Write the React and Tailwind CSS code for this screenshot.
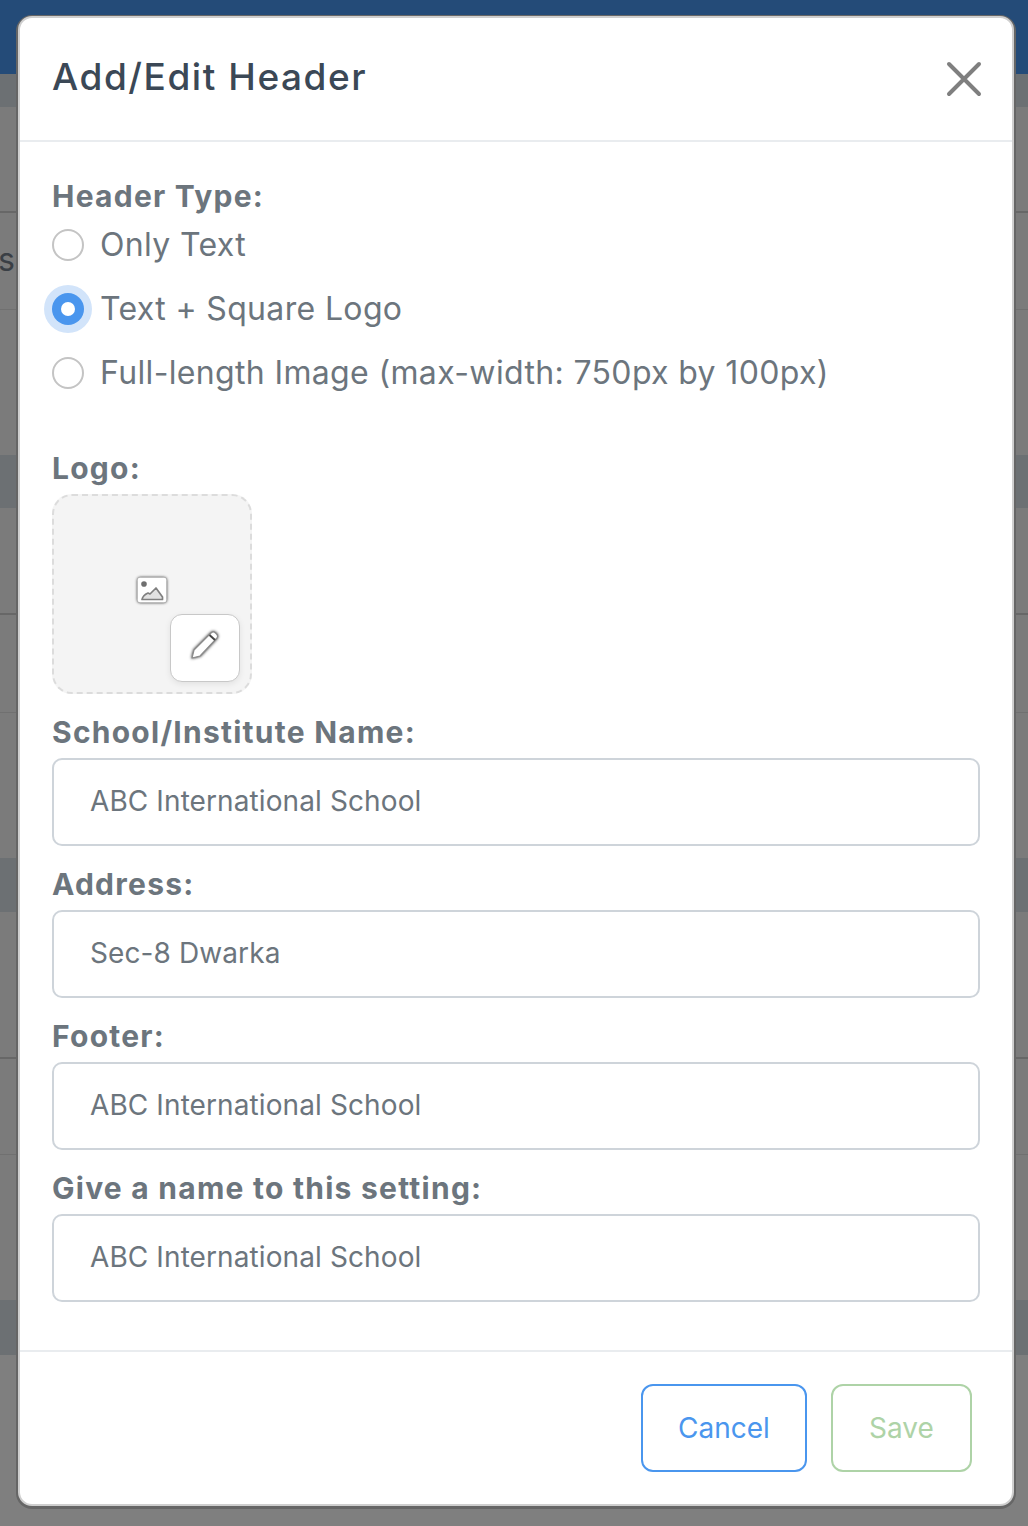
import React from 'react'

const font = { fontFamily: 'Inter, "Open Sans", sans-serif' }

const lines = {
  none: '',
  strong: 'border-b-2 border-[#676767]',
  faint: 'border-b border-[#707070]',
}

function BgRow({ h, band, line = 'none', children }) {
  return (
    <div className={`${h} ${band ? 'bg-[#6c7073]' : 'bg-[#7b7b7b]'} ${lines[line]} flex items-center overflow-hidden`}>
      {children}
    </div>
  )
}

function Radio({ label, checked }) {
  return (
    <label className="flex h-[64px] items-center gap-4">
      {checked ? (
        <span className="flex h-8 w-8 items-center justify-center rounded-full bg-[#4a96ee] shadow-[0_0_0_8px_#d2e4fa]">
          <span className="h-[14px] w-[14px] rounded-full bg-white"></span>
        </span>
      ) : (
        <span className="h-8 w-8 rounded-full border-2 border-[#c4c4c4] bg-white"></span>
      )}
      <span className="text-[32px] tracking-[0.35px] text-[#6c757d]">{label}</span>
    </label>
  )
}

function Label({ children, className = 'mb-[10px]' }) {
  return <div className={`${className} h-8 text-[30px] leading-8 font-bold tracking-[1.25px] text-[#6c757d]`}>{children}</div>
}

function Field({ label, value }) {
  return (
    <div className="mb-[22px]">
      <Label>{label}</Label>
      <div className="flex h-[88px] items-center rounded-[10px] border-2 border-[#ced4da] pb-[2px] pl-[36px] text-[28px] tracking-[0.1px] text-[#6c757d]">{value}</div>
    </div>
  )
}

export default function App() {
  return (
    <div className="relative h-[1526px] w-[1028px] overflow-hidden bg-[#7f7f7f]" style={font}>
      {/* page behind the modal */}
      <div className="h-[74px] bg-[#244b78]"></div>
      <BgRow h="h-[33px]" band />
      <BgRow h="h-[106px]" line="strong" />
      <BgRow h="h-[97px]" line="faint">
        <span className="relative -top-px -ml-[2px] text-[32px] text-[#3a3f45]">s:</span>
      </BgRow>
      <BgRow h="h-[145px]" />
      <BgRow h="h-[53px]" band />
      <BgRow h="h-[107px]" line="strong" />
      <BgRow h="h-[98px]" line="faint" />
      <BgRow h="h-[145px]" />
      <BgRow h="h-[54px]" band />
      <BgRow h="h-[147px]" line="strong" />
      <BgRow h="h-[96px]" line="faint" />
      <BgRow h="h-[145px]" />
      <BgRow h="h-[55px]" band />

      {/* modal */}
      <div className="absolute top-[16px] left-[18px] flex h-[1490px] w-[996px] flex-col rounded-[14px] border-2 border-[#cfcfcf] bg-white shadow-[0_1px_0_2px_#666]">
        <div className="flex h-[124px] shrink-0 items-center justify-between border-b-2 border-[#e9ecef] pr-[30px] pl-[32px]">
          <h1 className="relative -top-[2px] text-[37px] font-medium tracking-[1.55px] text-[#3b4856]">Add/Edit Header</h1>
          <svg width="36" height="36" viewBox="0 0 36 36" fill="none" stroke="#7f7f7f" strokeWidth="4" strokeLinecap="round">
            <path d="M3 3l30 30M33 3L3 33" />
          </svg>
        </div>

        <div className="flex-1 px-8 pt-[38px]">
          <Label className="">Header Type:</Label>
          <div className="mt-px mb-[47px]">
            <Radio label="Only Text" />
            <Radio label="Text + Square Logo" checked />
            <Radio label="Full-length Image (max-width: 750px by 100px)" />
          </div>

          <Label>Logo:</Label>
          <div className="relative mb-[22px] flex h-[200px] w-[200px] items-center justify-center rounded-[20px] border-2 border-dashed border-[#dcdcdc] bg-[#f4f4f4]">
            <svg className="relative -top-[4px] drop-shadow-[0_0_1.5px_rgba(0,0,0,1)]" width="30" height="26" viewBox="0 0 30 26">
              <rect x="0.500" y="0.500" width="29" height="25" rx="3" fill="#fff" />
              <circle cx="7" cy="7" r="2.800" fill="#6f6f6f" />
              <path d="M5 22.500c.5-2.500 2.500-5 6-6.500l2 1L19 11l6.500 9v2.500z" fill="#e2e2e2" stroke="#808080" strokeWidth="1.700" strokeLinejoin="round" />
            </svg>
            <div className="absolute top-[118px] left-[116px] flex h-[68px] w-[70px] items-center justify-center rounded-[12px] border border-[#c8c8c8] bg-white shadow-[0_2px_6px_rgba(0,0,0,0.08)]">
              <svg className="relative -top-[4px] drop-shadow-[0_0_1.5px_rgba(0,0,0,0.85)]" width="32" height="32" viewBox="0 0 32 32" fill="#fff" stroke="#8c8c8c" strokeWidth="1.200" strokeLinejoin="round">
                <path d="M3 30l2-8L22 5c1.500-1.500 3-1.500 4.500 0l1 1c1.500 1.500 1.500 3 0 4.500L11 28z" />
                <path d="M20.500 7l5.500 5" stroke="#444" strokeWidth="2" />
              </svg>
            </div>
          </div>

          <Field label="School/Institute Name:" value="ABC International School" />
          <Field label="Address:" value="Sec-8 Dwarka" />
          <Field label="Footer:" value="ABC International School" />
          <Field label="Give a name to this setting:" value="ABC International School" />
        </div>

        <div className="flex h-[154px] shrink-0 justify-end gap-6 border-t-2 border-[#e9ecef] pt-[32px] pr-[40px]">
          <button className="h-[88px] w-[166px] rounded-[12px] border-2 border-[#4a96ee] text-[28px] text-[#4a96ee]">Cancel</button>
          <button className="h-[88px] w-[141px] rounded-[12px] border-2 border-[#aed3a7] text-[28px] text-[#aed3a7]">Save</button>
        </div>
      </div>
    </div>
  )
}
